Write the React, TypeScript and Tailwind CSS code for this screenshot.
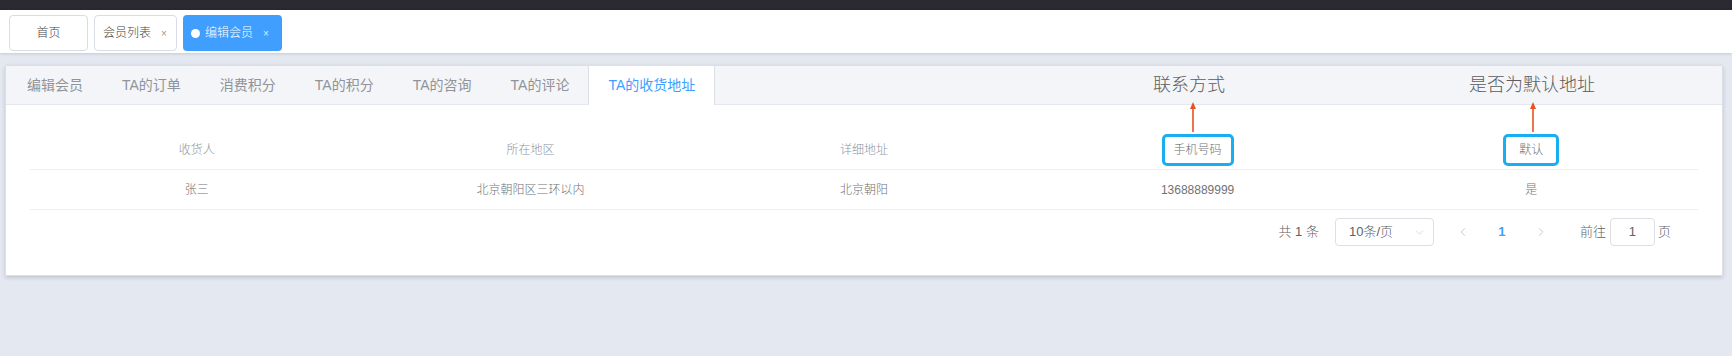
import { ChevronDown, ChevronLeft, ChevronRight } from "lucide-react";

const tabs = ["编辑会员", "TA的订单", "消费积分", "TA的积分", "TA的咨询", "TA的评论", "TA的收货地址"];

const font = "font-['Helvetica_Neue','Liberation_Sans','Noto_Sans_CJK_SC',sans-serif]";

function Arrow({ className }: { className: string }) {
  return (
    <svg className={className} width="10" height="30" viewBox="0 0 10 30">
      <line x1="5" y1="5" x2="5" y2="30" stroke="#e5531f" strokeWidth="1.6" />
      <polygon points="5,0 2,7 8,7" fill="#e5531f" />
    </svg>
  );
}

function TagsView() {
  return (
    <div className="flex h-[43px] items-start gap-[6px] bg-white pl-[9px] pt-[5px] shadow-[0_1px_3px_0_rgba(0,0,0,0.12),0_0_3px_0_rgba(0,0,0,0.04)]">
      <div className="flex h-[36px] w-[79px] items-center justify-center rounded-[4px] border border-[#d8dce5] text-[12px] font-light text-[#444]">
        首页
      </div>
      <div className="flex h-[36px] w-[83px] items-center rounded-[4px] border border-[#d8dce5] pl-[8px] text-[12px] font-light text-[#444]">
        会员列表
        <span className="ml-[10px] text-[10px] text-[#999]">×</span>
      </div>
      <div className="flex h-[36px] w-[99px] items-center rounded-[4px] bg-[#409eff] pl-[8px] text-[12px] font-light text-white">
        <span className="mr-[5px] h-[9px] w-[9px] rounded-full bg-white" />
        编辑会员
        <span className="ml-[10px] text-[10px] text-[#d9ebff]">×</span>
      </div>
    </div>
  );
}

function Pagination() {
  return (
    <div className="mt-[8px] flex h-[28px] items-center justify-end pr-[27px] text-[13px] font-light text-[#606266]">
      <span>共 1 条</span>
      <div className="ml-[16px] flex h-[28px] w-[99px] items-center justify-between rounded-[4px] border border-[#dcdfe6] pl-[13px] pr-[7px]">
        <span>10条/页</span>
        <ChevronDown size={13} strokeWidth={1.2} className="text-[#c0c4cc]" />
      </div>
      <div className="ml-[14px] flex h-[28px] w-[30px] items-center justify-center text-[#b0b4bc]">
        <ChevronLeft size={14} strokeWidth={1.2} />
      </div>
      <div className="ml-[9px] flex h-[28px] w-[30px] items-center justify-center font-bold text-[#409eff]">1</div>
      <div className="ml-[9px] flex h-[28px] w-[30px] items-center justify-center text-[#b0b4bc]">
        <ChevronRight size={14} strokeWidth={1.2} />
      </div>
      <span className="ml-[24px]">前往</span>
      <div className="ml-[4px] flex h-[28px] w-[45px] items-center justify-center rounded-[4px] border border-[#dcdfe6]">1</div>
      <span className="ml-[3px]">页</span>
    </div>
  );
}

export default function App() {
  return (
    <div className={`h-[356px] w-[1732px] overflow-hidden bg-[#e4e8f1] ${font}`}>
      <div className="h-[10px] bg-[#2b2a33]" />
      <TagsView />
      <div className="relative ml-[5px] mt-[12px] w-[1718px] border border-[#dcdfe6] bg-white pb-[29px] shadow-[0_2px_4px_0_rgba(0,0,0,0.12),0_0_6px_0_rgba(0,0,0,0.04)]">
        <div className="flex h-[39px] items-start border-b border-[#e4e7ed] bg-[#f3f5f8]">
          {tabs.map((t, i) => {
            const active = i === tabs.length - 1;
            return (
              <div
                key={t}
                className={`flex h-[39px] items-center border-x px-[19px] text-[14px] ${i > 0 ? "-ml-px" : "pl-[20px]"} ${
                  active ? "border-[#dcdfe6] bg-white text-[#409eff]" : "border-transparent text-[#909399]"
                }`}
              >
                {t}
              </div>
            );
          })}
        </div>

        <span className="absolute left-[1147px] top-[10px] text-[18px] font-light leading-[18px] text-[#5c5c5c]">联系方式</span>
        <span className="absolute left-[1463px] top-[10px] text-[18px] font-light leading-[18px] text-[#5c5c5c]">是否为默认地址</span>
        <Arrow className="absolute left-[1182px] top-[36px]" />
        <Arrow className="absolute left-[1522px] top-[36px]" />

        <div className="px-[24px] pt-[26px]">
          <div className="grid h-[39px] grid-cols-5 items-center border-b border-[#ebeef5] text-center text-[12px] font-light text-[#909399]">
            <div>收货人</div>
            <div>所在地区</div>
            <div>详细地址</div>
            <div>
              <span className="inline-block rounded-[5px] border-[3px] border-[#19aef0] px-[9px] py-[6px] leading-[14px] text-[#707276]">
                手机号码
              </span>
            </div>
            <div>
              <span className="inline-block rounded-[5px] border-[3px] border-[#19aef0] px-[13px] py-[6px] leading-[14px] text-[#707276]">
                默认
              </span>
            </div>
          </div>
          <div className="grid h-[40px] grid-cols-5 items-center border-b border-[#ebeef5] text-center text-[12px] font-light text-[#707276]">
            <div>张三</div>
            <div>北京朝阳区三环以内</div>
            <div>北京朝阳</div>
            <div>13688889999</div>
            <div>是</div>
          </div>
          <Pagination />
        </div>
      </div>
    </div>
  );
}
